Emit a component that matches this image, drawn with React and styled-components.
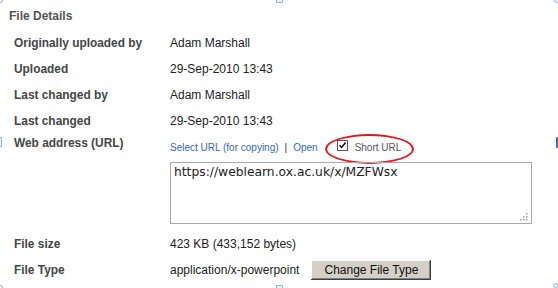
import React from 'react';
import styled, { createGlobalStyle } from 'styled-components';

const GlobalStyle = createGlobalStyle`
  html, body {
    margin: 0;
    padding: 0;
    background: #ffffff;
  }
  body {
    font-family: "Liberation Sans", Arial, sans-serif;
  }
`;

const Page = styled.div`
  position: relative;
  width: 558px;
  height: 288px;
  overflow: hidden;
  background: #fff;
  color: #222;
`;

const Title = styled.div`
  padding: 9px 0 7px 9px;
  font-size: 12px;
  line-height: 14px;
  font-weight: bold;
  color: #555;
`;

const Row = styled.div`
  display: flex;
  padding-left: 14px;
  margin-top: ${(p) => p.$gap || 0}px;
`;

const Label = styled.div`
  width: 156px;
  flex-shrink: 0;
  font-size: 11.9px;
  font-weight: bold;
  color: #464646;
  line-height: ${(p) => p.$lh || 26}px;
`;

const Value = styled.div`
  display: flex;
  flex-direction: ${(p) => (p.$column ? 'column' : 'row')};
  align-items: ${(p) => (p.$column ? 'flex-start' : 'center')};
  font-size: 12px;
  line-height: 26px;
  color: #222;
`;

const LinkLine = styled.div`
  position: relative;
  font-size: 10px;
  line-height: 27px;
  white-space: nowrap;
`;

const Link = styled.a`
  color: #3366cc;
  text-decoration: none;
  cursor: pointer;
`;

const Sep = styled.span`
  color: #333;
  margin: 0 6px;
`;

const CheckBox = styled.span`
  display: inline-block;
  box-sizing: border-box;
  width: 11px;
  height: 11px;
  margin-left: 19px;
  margin-right: 7px;
  border: 1px solid #555;
  background: #fff;
  vertical-align: baseline;
  position: relative;

  svg {
    position: absolute;
    left: 0;
    top: 0;
  }
`;

const ShortLabel = styled.span`
  color: #555;
`;

const Ellipse = styled.span`
  position: absolute;
  left: 155px;
  top: 0;
  width: 85px;
  height: 26px;
  border: 2px solid #e8141c;
  border-radius: 50%;
`;

const UrlBox = styled.div`
  position: relative;
  box-sizing: border-box;
  width: 362px;
  height: 62px;
  margin-top: 1px;
  padding: 2px 3px;
  border: 1px solid #a9a9a9;
  font-family: "DejaVu Sans", Verdana, sans-serif;
  font-size: 12.3px;
  line-height: 14px;
  color: #222;
`;

const Grip = styled.svg`
  position: absolute;
  right: 3px;
  bottom: 2px;
`;

const Button = styled.button`
  box-sizing: border-box;
  width: 120px;
  height: 20px;
  margin-left: 12px;
  padding: 0;
  border: none;
  background: #d4d0c8;
  box-shadow: inset -1px -1px #404040, inset 1px 1px #ffffff, inset -2px -2px #808080;
  font-family: "Liberation Sans", Arial, sans-serif;
  font-size: 12px;
  color: #111;
`;

const Handle = styled.span`
  position: absolute;
  box-sizing: border-box;
  border: 1px solid #8fb0d8;
  background: #eef4fb;
  border-radius: ${(p) => (p.$round ? '50%' : '1px')};
`;

function ResizeGrip() {
  const dots = [
    [8, 0],
    [5, 3], [8, 3],
    [2, 6], [5, 6], [8, 6],
  ];
  return (
    <Grip width="10" height="8" viewBox="0 0 10 8">
      {dots.map(([x, y], i) => (
        <rect key={i} x={x} y={y} width="1.5" height="1.5" fill="#a0a0a0" />
      ))}
    </Grip>
  );
}

const details = [
  ['Originally uploaded by', 'Adam Marshall'],
  ['Uploaded', '29-Sep-2010 13:43'],
  ['Last changed by', 'Adam Marshall'],
  ['Last changed', '29-Sep-2010 13:43'],
];

export default function App() {
  return (
    <Page>
      <GlobalStyle />
      <Title>File Details</Title>

      {details.map(([label, value]) => (
        <Row key={label}>
          <Label>{label}</Label>
          <Value>{value}</Value>
        </Row>
      ))}

      <Row>
        <Label $lh={19}>Web address (URL)</Label>
        <Value $column>
          <LinkLine>
            <Link>Select URL (for copying)</Link>
            <Sep>|</Sep>
            <Link>Open</Link>
            <CheckBox>
              <svg width="9" height="9" viewBox="0 0 9 9">
                <path d="M1.5 4.2 L3.6 6.4 L7.6 1.6" fill="none" stroke="#111" strokeWidth="1.6" />
              </svg>
            </CheckBox>
            <ShortLabel>Short URL</ShortLabel>
            <Ellipse />
          </LinkLine>
          <UrlBox>
            https://weblearn.ox.ac.uk/x/MZFWsx
            <ResizeGrip />
          </UrlBox>
        </Value>
      </Row>

      <Row $gap={7}>
        <Label>File size</Label>
        <Value>423 KB (433,152 bytes)</Value>
      </Row>
      <Row>
        <Label>File Type</Label>
        <Value>
          application/x-powerpoint
          <Button>Change File Type</Button>
        </Value>
      </Row>

      <Handle $round style={{ left: -3, top: -3, width: 6, height: 6 }} />
      <Handle style={{ left: 276, top: -4, width: 7, height: 7 }} />
      <Handle style={{ left: -5, top: 137, width: 7, height: 10 }} />
      <Handle style={{ left: 556, top: 137, width: 7, height: 11, borderColor: '#3a5f9a', background: '#5a7fb8' }} />
      <Handle style={{ left: 276, top: 285, width: 7, height: 7 }} />
      <Handle $round style={{ left: -3, top: 285, width: 6, height: 6 }} />
      <Handle $round style={{ left: 553, top: 283, width: 5, height: 5 }} />
      <Handle $round style={{ left: 554, top: -3, width: 6, height: 6 }} />
    </Page>
  );
}
